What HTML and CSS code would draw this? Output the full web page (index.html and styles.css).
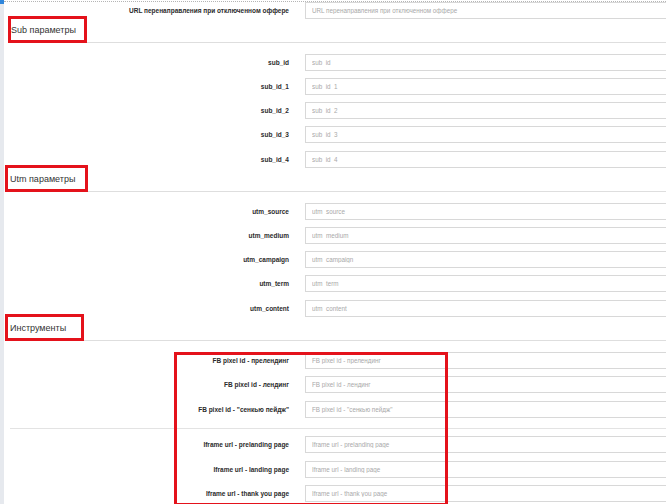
FILE: index.html
```html
<!DOCTYPE html>
<html lang="ru">
<head>
  <meta charset="UTF-8">
  <title>Настройки оффера</title>
  <meta name="viewport" content="width=device-width, initial-scale=1.0">
  <link rel="stylesheet" href="styles.css">
</head>
<body>

  <div class="layout">
    <div class="edge"></div>

    <div class="content">
      <div class="field field-top">
        <label class="field-label">URL перенаправления при отключенном оффере</label>
        <input class="field-input" type="text" placeholder="URL перенаправления при отключенном оффере">
      </div>

      <div class="group">
        <div class="group-head">
          <span class="group-title group-title-first">Sub параметры</span>
        </div>
        <div class="fields">
          <div class="field">
            <label class="field-label">sub_id</label>
            <input class="field-input" type="text" placeholder="sub_id">
          </div>
          <div class="field">
            <label class="field-label">sub_id_1</label>
            <input class="field-input" type="text" placeholder="sub_id_1">
          </div>
          <div class="field">
            <label class="field-label">sub_id_2</label>
            <input class="field-input" type="text" placeholder="sub_id_2">
          </div>
          <div class="field">
            <label class="field-label">sub_id_3</label>
            <input class="field-input" type="text" placeholder="sub_id_3">
          </div>
          <div class="field">
            <label class="field-label">sub_id_4</label>
            <input class="field-input" type="text" placeholder="sub_id_4">
          </div>
        </div>
      </div>

      <div class="group">
        <div class="group-head">
          <span class="group-title">Utm параметры</span>
        </div>
        <div class="fields">
          <div class="field">
            <label class="field-label">utm_source</label>
            <input class="field-input" type="text" placeholder="utm_source">
          </div>
          <div class="field">
            <label class="field-label">utm_medium</label>
            <input class="field-input" type="text" placeholder="utm_medium">
          </div>
          <div class="field">
            <label class="field-label">utm_campaign</label>
            <input class="field-input" type="text" placeholder="utm_campaign">
          </div>
          <div class="field">
            <label class="field-label">utm_term</label>
            <input class="field-input" type="text" placeholder="utm_term">
          </div>
          <div class="field">
            <label class="field-label">utm_content</label>
            <input class="field-input" type="text" placeholder="utm_content">
          </div>
        </div>
      </div>

      <div class="group">
        <div class="group-head">
          <span class="group-title group-title-tools">Инструменты</span>
        </div>
        <div class="fields fields-tools">
          <div class="field field-wide">
            <label class="field-label">FB pixel id - прелендинг</label>
            <input class="field-input" type="text" placeholder="FB pixel id - прелендинг">
          </div>
          <div class="field field-wide">
            <label class="field-label">FB pixel id - лендинг</label>
            <input class="field-input" type="text" placeholder="FB pixel id - лендинг">
          </div>
          <div class="field field-wide">
            <label class="field-label">FB pixel id - "сенкью пейдж"</label>
            <input class="field-input" type="text" placeholder="FB pixel id - &quot;сенкью пейдж&quot;">
          </div>

          <hr class="divider">

          <div class="field field-wide">
            <label class="field-label">Iframe url - prelanding page</label>
            <input class="field-input" type="text" placeholder="Iframe url - prelanding page">
          </div>
          <div class="field field-wide">
            <label class="field-label">Iframe url - landing page</label>
            <input class="field-input" type="text" placeholder="Iframe url - landing page">
          </div>
          <div class="field field-wide">
            <label class="field-label">Iframe url - thank you page</label>
            <input class="field-input" type="text" placeholder="Iframe url - thank you page">
          </div>

          <!-- выделение на скриншоте -->
          <div class="mark"></div>
        </div>
      </div>
    </div>
  </div>

</body>
</html>
```

FILE: styles.css
```css
html {
  overflow: hidden;
}

body {
  margin: 0;
  font-family: 'Liberation Sans', Arial, sans-serif;
  background-color: #fff;
  color: #333;
}

.layout {
  display: flex;
  min-height: 504px;
  overflow: hidden;
}

.edge {
  width: 4px;
  flex-shrink: 0;
  background-color: #e6e9ee;
  border-top: 4px solid #2f86dc;
}

.content {
  flex: 1;
  margin-top: 1px;
  margin-right: -40px;
  padding-left: 6px;
  border-top: 1px dotted #b5b5b5;
}

.field {
  display: flex;
  align-items: center;
  gap: 16px;
  margin-top: 7.25px;
}

.field-top {
  margin-top: 0;
}

.field-wide {
  margin-top: 7.5px;
}

.field-label {
  width: 279px;
  flex-shrink: 0;
  text-align: right;
  font-size: 6.5px;
  font-weight: bold;
  color: #2b2b2b;
}

.field-input {
  flex: 1;
  height: 17px;
  box-sizing: border-box;
  margin: 0;
  padding: 0 6px;
  border: 1px solid #d8d8d8;
  border-radius: 0;
  font-family: inherit;
  font-size: 6.3px;
  color: #555;
  background-color: #fff;
}

.field-input::placeholder {
  color: #a9a9a9;
}

.group-head {
  display: flex;
  align-items: flex-end;
  height: 23px;
  border-bottom: 1px solid #dedede;
}

.group-title {
  display: flex;
  align-items: center;
  height: 27px;
  box-sizing: border-box;
  margin-left: -5px;
  margin-bottom: -1px;
  padding: 0 10px 0 2px;
  border: 3px solid #e4121b;
  font-size: 9px;
  color: #333;
}

.group-title-first {
  margin-left: -2px;
  padding-left: 0;
  padding-right: 8px;
}

.group-title-tools {
  padding-right: 15px;
}

.fields {
  padding-top: 10.5px;
  padding-bottom: 0.5px;
}

.fields > .field:first-child {
  margin-top: 0;
}

.fields-tools {
  position: relative;
}

.divider {
  margin: 10px 0 3px;
  border: none;
  border-top: 1px solid #e3e3e3;
}

.mark {
  position: absolute;
  left: 164px;
  top: 10.5px;
  width: 274px;
  height: 154px;
  box-sizing: border-box;
  border: 3px solid #e4121b;
}
```
